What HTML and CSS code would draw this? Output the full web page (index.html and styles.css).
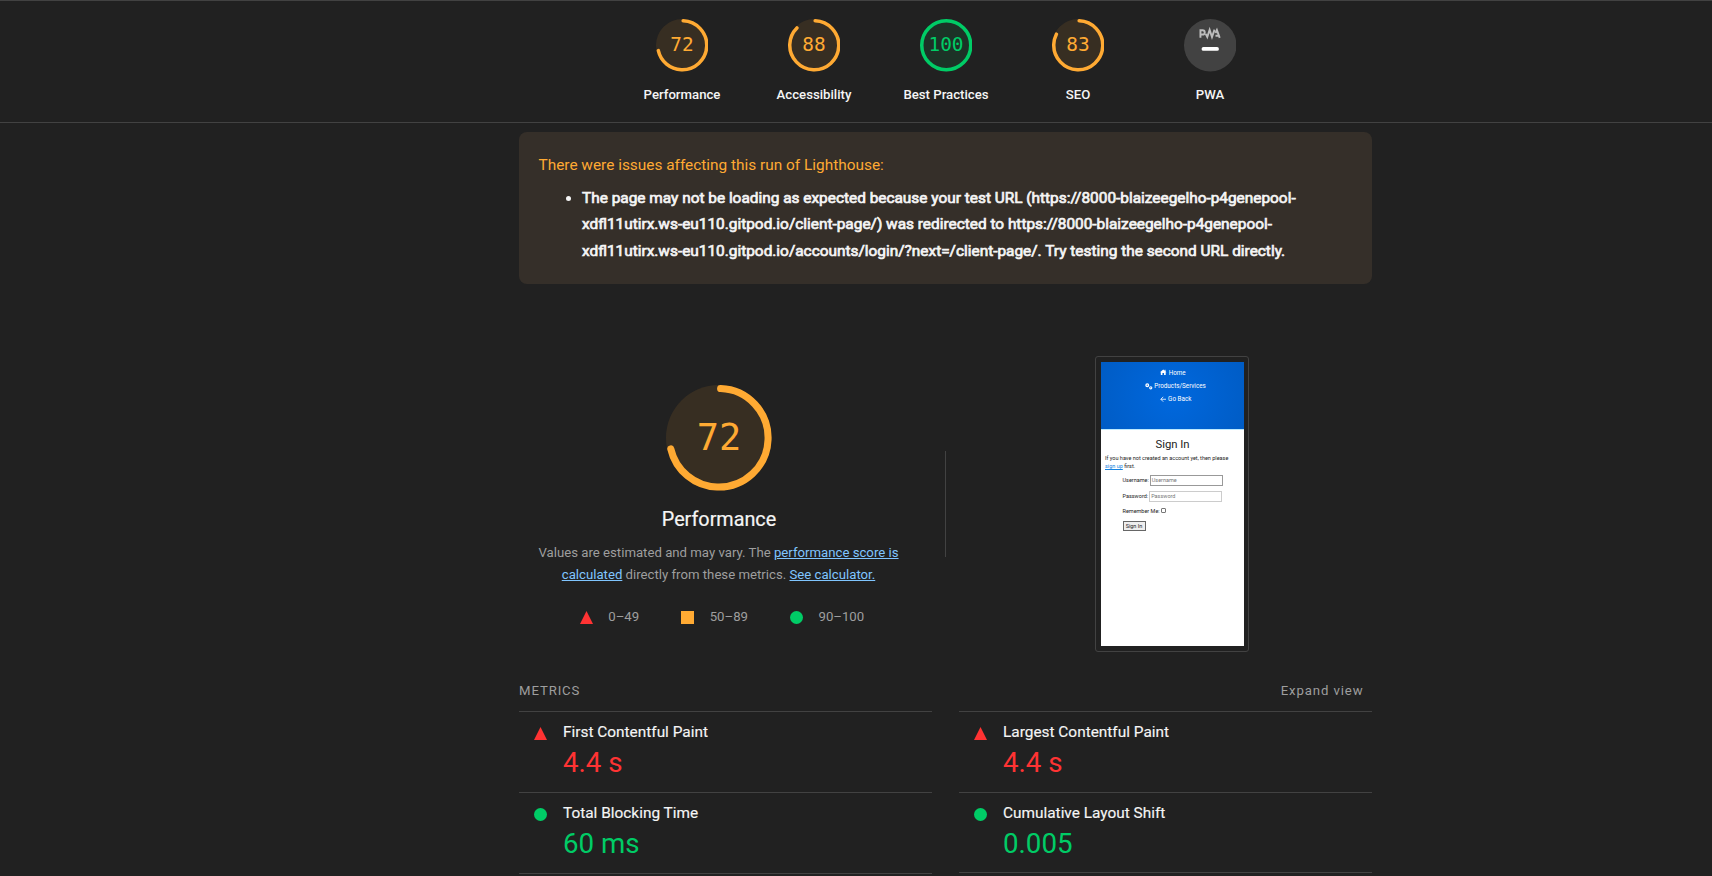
FILE: index.html
```html
<!DOCTYPE html>
<html lang="en">
<head>
<meta charset="utf-8">
<title>Lighthouse Report</title>
<link rel="stylesheet" href="styles.css">
</head>
<body>
<header class="scores">
  <a class="score average">
    <svg class="dial" viewBox="0 0 120 120"><circle class="base" cx="60" cy="60" r="60"/><circle class="arc" cx="60" cy="60" r="56" pathLength="100" stroke-dasharray="70.5 100" transform="rotate(-87.9 60 60)"/></svg>
    <span class="value">72</span><span class="label">Performance</span>
  </a>
  <a class="score average">
    <svg class="dial" viewBox="0 0 120 120"><circle class="base" cx="60" cy="60" r="60"/><circle class="arc" cx="60" cy="60" r="56" pathLength="100" stroke-dasharray="86.5 100" transform="rotate(-87.9 60 60)"/></svg>
    <span class="value">88</span><span class="label">Accessibility</span>
  </a>
  <a class="score pass">
    <svg class="dial" viewBox="0 0 120 120"><circle class="base" cx="60" cy="60" r="60"/><circle class="arc" cx="60" cy="60" r="56"/></svg>
    <span class="value">100</span><span class="label">Best Practices</span>
  </a>
  <a class="score average">
    <svg class="dial" viewBox="0 0 120 120"><circle class="base" cx="60" cy="60" r="60"/><circle class="arc" cx="60" cy="60" r="56" pathLength="100" stroke-dasharray="81.5 100" transform="rotate(-87.9 60 60)"/></svg>
    <span class="value">83</span><span class="label">SEO</span>
  </a>
  <a class="score">
    <svg class="dial" viewBox="0 0 60 60"><circle cx="30" cy="30" r="30" fill="#424242"/><g fill="none" stroke="#bdbdbd" stroke-width="2.2"><path d="M18.800 21.500V12.800h2.400q2.500 0 2.500 2.500t-2.500 2.500h-2"/><path d="M24.800 17l1.800 3.600 2.700-8.200 2.700 8.200 2.900-8.400"/><path d="M36 16l1.600-3.400 3.200 8.900M36 19.200h3.500"/></g><path d="M22.200 34.200h15.600" stroke="#fff" stroke-width="4.200" stroke-linecap="round"/></svg>
    <span class="label">PWA</span>
  </a>
</header>
<main class="report">
  <section class="warning">
    <p class="warning-title">There were issues affecting this run of Lighthouse:</p>
    <ul class="warning-list"><li>The page may not be loading as expected because your test URL (https://8000-blaizeegelho-p4genepool-<br>xdfl11utirx.ws-eu110.gitpod.io/client-page/) was redirected to https://8000-blaizeegelho-p4genepool-<br>xdfl11utirx.ws-eu110.gitpod.io/accounts/login/?next=/client-page/. Try testing the second URL directly.</li></ul>
  </section>
  <section class="overview">
    <div class="summary">
      <div class="score average big">
        <svg class="dial" viewBox="0 0 120 120"><circle class="base" cx="60" cy="60" r="60"/><circle class="arc" cx="60" cy="60" r="56" pathLength="100" stroke-dasharray="70.8 100" transform="rotate(-87.9 60 60)"/></svg>
        <span class="value">72</span>
      </div>
      <h1 class="title">Performance</h1>
      <p class="desc">Values are estimated and may vary. The <a>performance score is</a><br><a>calculated</a> directly from these metrics. <a>See calculator.</a></p>
      <div class="scale">
        <span class="range"><svg class="mark" viewBox="0 0 13 13"><path d="M6.500 0L13 13H0z" fill="#f33"/></svg>0–49</span>
        <span class="range"><svg class="mark" viewBox="0 0 13 13"><path d="M0 0h13v13H0z" fill="#fa3"/></svg>50–89</span>
        <span class="range"><svg class="mark" viewBox="0 0 13 13"><circle cx="6.500" cy="6.500" r="6.500" fill="#0c6"/></svg>90–100</span>
      </div>
    </div>
    <div class="divider"></div>
    <div class="preview">
      <div class="frame"><div class="screen">
        <div class="hero">
          <div class="nav home"><svg class="ico" viewBox="0 0 16 16"><path d="M8 1L0 8h2v7h4v-5h4v5h4V8h2l-2.500-2.200V2h-2v2z" fill="#fff"/></svg><span>Home</span></div>
          <div class="nav"><svg class="ico cogs" viewBox="0 0 18 16"><g fill="none" stroke="#fff"><circle cx="5" cy="5" r="3" stroke-width="3"/><circle cx="13" cy="11" r="2.500" stroke-width="2.500"/></g></svg><span>Products/Services</span></div>
          <div class="nav"><svg class="ico" viewBox="0 0 16 16"><path d="M15 8H2M8 2L2 8l6 6" fill="none" stroke="#fff" stroke-width="2"/></svg><span>Go Back</span></div>
        </div>
        <div class="signin">Sign In</div>
        <p class="hint">If you have not created an account yet, then please<br><a>sign up</a> first.</p>
        <div class="form">
          <div class="row"><span>Username:</span><span class="input dark">Username</span></div>
          <div class="row"><span>Password:</span><span class="input">Password</span></div>
          <div class="row remember"><span>Remember Me:</span><span class="check"></span></div>
          <span class="button">Sign In</span>
        </div>
      </div></div>
    </div>
  </section>
  <section class="metrics">
    <div class="metrics-head"><span>METRICS</span><span class="expand">Expand view</span></div>
    <div class="grid">
      <div class="metric fail"><svg class="mark" viewBox="0 0 13 13"><path d="M6.500 0L13 13H0z" fill="#f33"/></svg><div><div class="name">First Contentful Paint</div><div class="num">4.4 s</div></div></div>
      <div class="metric fail"><svg class="mark" viewBox="0 0 13 13"><path d="M6.500 0L13 13H0z" fill="#f33"/></svg><div><div class="name">Largest Contentful Paint</div><div class="num">4.4 s</div></div></div>
      <div class="metric ok last"><svg class="mark" viewBox="0 0 13 13"><circle cx="6.500" cy="6.500" r="6.500" fill="#0c6"/></svg><div><div class="name">Total Blocking Time</div><div class="num">60 ms</div></div></div>
      <div class="metric ok last short"><svg class="mark" viewBox="0 0 13 13"><circle cx="6.500" cy="6.500" r="6.500" fill="#0c6"/></svg><div><div class="name">Cumulative Layout Shift</div><div class="num">0.005</div></div></div>
    </div>
  </section>
</main>
</body>
</html>
```
FILE: styles.css
```css
* { box-sizing: border-box; }
body { margin: 0; height: 876px; overflow: hidden; background: #212121; color: #f5f5f5; font-family: Roboto, "Liberation Sans", sans-serif; }
p, h1, ul { margin: 0; padding: 0; }
.scores { height: 123px; border-top: 1px solid #424242; border-bottom: 1px solid #424242; display: flex; justify-content: center; padding: 18px 0 0 180px; }
.score { width: 132px; display: grid; grid-template-rows: 53px auto; justify-items: center; }
.dial { grid-area: 1 / 1; width: 52.5px; height: 52.5px; display: block; }
.value { grid-area: 1 / 1; align-self: center; font: 19.4px/24px "DejaVu Sans Mono", monospace; padding-bottom: 2px; }
.label { font-size: 13.2px; font-weight: 500; line-height: 20px; margin-top: 13px; white-space: nowrap; }
.average { --c: #fa3; }
.pass { --c: #0c6; }
.base { fill: var(--c); opacity: .1; }
.arc { fill: none; stroke: var(--c); stroke-width: 8; stroke-linecap: round; }
.value { color: var(--c); }
.report { width: 853px; margin: 9px 0 0 519px; }
.warning { height: 152px; border-radius: 8px; background: #352f29; padding: 20px 19.5px; }
.warning-title { color: #fa3; font-size: 15.4px; line-height: 26px; }
.warning-list { list-style: disc; font-size: 15.4px; -webkit-text-stroke: .7px #f5f5f5; line-height: 26.4px; padding-left: 43.5px; margin-top: 7px; white-space: nowrap; }
.overview { display: flex; height: 368px; margin-top: 72px; }
.summary { width: 400px; display: flex; flex-direction: column; align-items: center; padding-top: 29px; }
.big { width: 106px; grid-template-rows: 106px; }
.big .dial { width: 105.6px; height: 105.6px; }
.big .value { font-size: 37px; line-height: 44px; padding-bottom: 0; }
.title { font-size: 19.8px; font-weight: 400; line-height: 26px; margin-top: 16px; -webkit-text-stroke: .2px #f5f5f5; }
.desc { font-size: 13.2px; line-height: 22px; text-align: center; color: #9e9e9e; margin-top: 9px; margin-left: -1px; white-space: nowrap; }
.desc a { color: #80c5ff; text-decoration: underline; }
.scale { display: flex; gap: 42px; margin: 20px 0 0 6px; color: #9e9e9e; font-size: 13.2px; line-height: 22px; }
.range { display: flex; align-items: center; gap: 15.5px; }
.mark { width: 13px; height: 13px; flex: none; }
.divider { width: 1px; height: 106px; background: #424242; margin: 95px 0 0 26px; }
.preview { margin-left: 149px; }
.frame { width: 154px; height: 296px; border: 1px solid #424242; border-radius: 3px; padding: 5px; }
.screen { width: 143px; height: 284px; background: #fff; color: #222; overflow: hidden; }
.hero { height: 68px; background: radial-gradient(circle at 50% 50%, #0068de, #005cc5); color: #fff; padding-top: 4px; border-bottom: 1px solid #bdeaff; }
.nav { display: flex; justify-content: center; align-items: center; gap: 2px; height: 13.4px; font-size: 6.3px; padding-left: 6px; }
.home { padding-left: 1px; }
.ico { width: 6.500px; height: 6.500px; }
.cogs { width: 8px; height: 7px; margin-right: -1px; }
.signin { text-align: center; font-size: 11.3px; line-height: 14px; margin-top: 8px; }
.hint { font-size: 5.500px; line-height: 8px; margin: 2px 0 0 4px; white-space: nowrap; }
.hint a { color: #1683e0; text-decoration: underline; }
.form { padding: 2px 0 0 21.5px; font-size: 5.500px; }
.row { display: flex; align-items: center; gap: 1px; height: 16px; }
.input { width: 73px; height: 11px; border: 1px solid #ccc; color: #777; padding-left: 1px; line-height: 9px; }
.dark { border-color: #999; }
.remember { height: 13px; }
.check { width: 5px; height: 5px; border: 1px solid #777; border-radius: 1px; }
.button { display: block; width: 23px; height: 10px; border: 1px solid #666; background: #eee; line-height: 8px; text-align: center; margin-top: 4px; }
.metrics-head { display: flex; justify-content: space-between; height: 20px; margin-top: -43px; padding-right: 8.5px; color: #9e9e9e; font-size: 13.2px; line-height: 20px; letter-spacing: .88px; }
.grid { display: grid; grid-template-columns: 413px 413px; column-gap: 27px; margin-top: 10px; align-items: start; }
.metric { display: flex; height: 81px; border-top: 1px solid #424242; padding: 9px 0 0 15px; gap: 16px; }
.metric .mark { margin-top: 6px; }
.last { height: 82px; border-bottom: 1px solid #424242; }
.short { height: 81px; }
.name { font-size: 15.4px; line-height: 22px; -webkit-text-stroke: .15px #f5f5f5; }
.num { font-size: 27.7px; line-height: 34px; margin-top: 3px; }
.fail .num { color: #f33; }
.ok .num { color: #0c6; }
```
